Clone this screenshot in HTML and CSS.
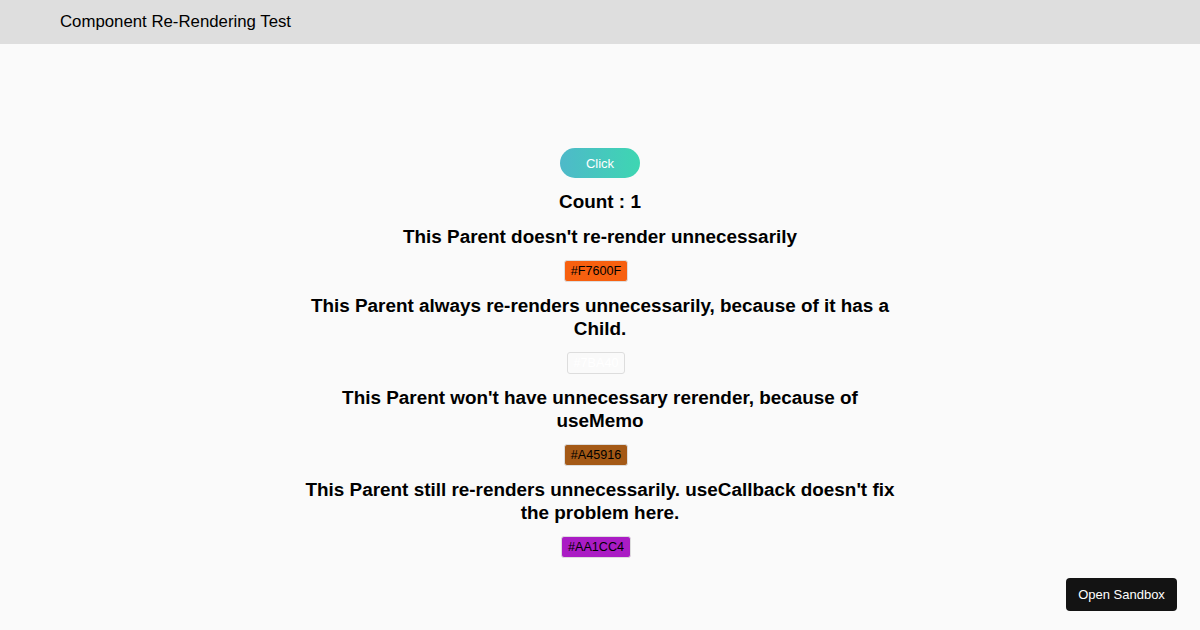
FILE: index.html
```html
<!DOCTYPE html>
<html>
<head>
<meta charset="utf-8">
<link rel="stylesheet" href="styles.css">
</head>
<body>
<header class="topbar"><span class="title">Component Re-Rendering Test</span></header>
<main class="content">
  <button class="click-btn">Click</button>
  <h2 class="count">Count : 1</h2>
  <h2 class="heading">This Parent doesn't re-render unnecessarily</h2>
  <span class="badge" style="background:#F7600F">#F7600F</span>
  <h2 class="heading">This Parent always re-renders unnecessarily, because of it has a Child.</h2>
  <span class="badge badge-invalid">#7BA40</span>
  <h2 class="heading">This Parent won't have unnecessary rerender, because of useMemo</h2>
  <span class="badge" style="background:#A45916">#A45916</span>
  <h2 class="heading">This Parent still re-renders unnecessarily. useCallback doesn't fix the problem here.</h2>
  <span class="badge" style="background:#AA1CC4">#AA1CC4</span>
</main>
<a class="sandbox">Open Sandbox</a>
</body>
</html>
```
FILE: styles.css
```css
html, body {
  margin: 0;
  padding: 0;
  background: #fafafa;
  font-family: "Liberation Sans", Arial, sans-serif;
  color: #000;
}
.topbar {
  height: 44px;
  background: #dedede;
  display: flex;
  align-items: center;
  padding-left: 60px;
}
.title {
  font-size: 16.8px;
}
.content {
  display: flex;
  flex-direction: column;
  align-items: center;
  gap: 12px;
  padding-top: 104px;
}
.click-btn {
  width: 80px;
  height: 30px;
  border: none;
  border-radius: 15px;
  background: linear-gradient(90deg, #4eb9c9, #3ed6b2);
  color: #fff;
  font-family: "Liberation Sans", Arial, sans-serif;
  font-size: 13px;
}
.count, .heading {
  margin: 0;
  font-size: 18.9px;
  line-height: 23px;
  font-weight: bold;
  text-align: center;
}
.heading {
  max-width: 606px;
}
.badge {
  display: inline-block;
  font-size: 12.6px;
  line-height: 20px;
  height: 20px;
  padding: 0 6px;
  margin-right: 8px;
  border: 1px solid #ddd;
  border-radius: 3px;
  color: #000;
}
.badge-invalid {
  color: #fff;
  background: transparent;
}
.sandbox {
  position: fixed;
  right: 23px;
  bottom: 19px;
  width: 111px;
  height: 33px;
  box-sizing: border-box;
  background: #131313;
  color: #fff;
  border-radius: 4px;
  font-size: 13px;
  display: flex;
  align-items: center;
  justify-content: center;
}
```
